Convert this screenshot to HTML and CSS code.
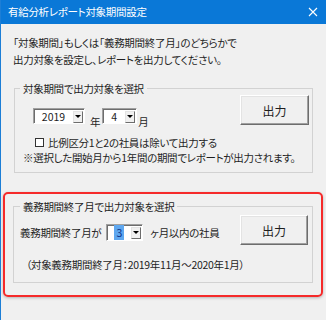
FILE: index.html
```html
<!DOCTYPE html>
<html lang="ja">
<head>
  <meta charset="UTF-8">
  <meta name="viewport" content="width=device-width, initial-scale=1.0">
  <title>有給分析レポート対象期間設定</title>
  <link rel="stylesheet" href="styles.css">
</head>
<body>
  <div class="window">
    <div class="titlebar">
      <span class="title">有給分析レポート対象期間設定</span>
      <svg class="close" width="10" height="10" viewBox="0 0 10 10">
        <path d="M1 1L9 9M9 1L1 9" stroke="#fff" stroke-width="1.1" fill="none"/>
      </svg>
    </div>

    <p class="intro">「対象期間」もしくは「義務期間終了月」のどちらかで<br>出力対象を設定し、レポートを出力してください。</p>

    <fieldset class="group group-period">
      <legend>対象期間で出力対象を選択</legend>
      <div class="group-row">
        <div class="period-select">
          <span class="combo combo-year">
            <span class="combo-value">2019</span>
            <span class="combo-btn"><span class="arrow"></span></span>
          </span>
          <span class="unit unit-year">年</span>
          <span class="combo combo-month">
            <span class="combo-value">4</span>
            <span class="combo-btn"><span class="arrow"></span></span>
          </span>
          <span class="unit unit-month">月</span>
        </div>
        <button class="btn btn-period">出力</button>
      </div>
      <label class="check-row"><span class="checkbox"></span>比例区分1と2の社員は除いて出力する</label>
      <p class="note">※選択した開始月から1年間の期間でレポートが出力されます。</p>
    </fieldset>

    <div class="highlight">
      <fieldset class="group group-duty">
        <legend>義務期間終了月で出力対象を選択</legend>
        <div class="group-row">
          <div class="duty-select">
            <span>義務期間終了月が</span>
            <span class="combo combo-months">
              <span class="combo-value"><span class="selected">3</span></span>
              <span class="combo-btn"><span class="arrow"></span></span>
            </span>
            <span class="duty-suffix">ヶ月以内の社員</span>
          </div>
          <button class="btn btn-duty">出力</button>
        </div>
        <p class="range">（対象義務期間終了月：2019年11月～2020年1月）</p>
      </fieldset>
    </div>
  </div>
</body>
</html>
```

FILE: styles.css
```css
body {
  margin: 0;
  padding: 0;
  font-family: "Noto Sans CJK JP", "Noto Sans", sans-serif;
  font-size: 10.5px;
  letter-spacing: -0.3px;
  font-feature-settings: "palt";
  color: #1e1e1e;
  background-color: #f0f0f0;
}

.window {
  width: 326px;
  height: 320px;
  box-sizing: border-box;
  border-left: 1px solid #1c7ed6;
  background-color: #f0f0f0;
  overflow: hidden;
}

.titlebar {
  height: 24px;
  background-color: #0a78d7;
  color: #fff;
  display: flex;
  align-items: center;
  justify-content: space-between;
  padding: 0 8px 0 7px;
}

.title {
  line-height: 14px;
}

.intro {
  margin: 10px 0 0 12px;
  line-height: 17px;
}

/* group boxes */
.group {
  box-sizing: border-box;
  border: 1px solid #d2d2d2;
  margin: 0;
  min-width: 0;
}

.group legend {
  padding: 0 3px;
  line-height: 13px;
}

.group-period {
  margin: 14px 0 0 13px;
  width: 299px;
  padding: 0 3px 7px 5px;
}

.group-row {
  display: flex;
  justify-content: space-between;
}

.group-period .group-row {
  align-items: flex-end;
  padding-left: 13px;
}

.period-select {
  display: flex;
  align-items: flex-end;
  margin-bottom: 1px;
}

.unit {
  line-height: 13px;
  margin-bottom: -4px;
}

.unit-year {
  margin: 0 2px -4px 5px;
}

.unit-month {
  margin-left: 1px;
}

/* combo boxes */
.combo {
  box-sizing: border-box;
  display: flex;
  align-items: center;
  background-color: #fff;
  border: 1px solid;
  border-color: #a0a0a0 #fff #fff #a0a0a0;
  box-shadow: inset 1px 1px 0 #6d6d6d;
}

.combo-year {
  width: 52px;
  height: 16px;
}

.combo-month {
  width: 35px;
  height: 16px;
}

.combo-months {
  width: 37px;
  height: 17px;
  margin-left: 5px;
}

.combo-value {
  flex: 1;
  text-align: center;
  line-height: 13px;
  padding-top: 1px;
  letter-spacing: 0;
}

.selected {
  background-color: #5ea7ef;
  color: #0c2f86;
  padding: 0 2px;
}

.combo-btn {
  box-sizing: border-box;
  width: 10px;
  height: 12px;
  margin: 1px 1px 0 0;
  background-color: #f0f0f0;
  border: 1px solid;
  border-color: #e3e3e3 #6d6d6d #6d6d6d #e3e3e3;
  display: flex;
  align-items: center;
  justify-content: center;
}

.arrow {
  width: 0;
  height: 0;
  border-left: 3px solid transparent;
  border-right: 3px solid transparent;
  border-top: 3px solid #000;
}

/* buttons */
.btn {
  box-sizing: border-box;
  height: 30px;
  font-family: inherit;
  font-size: 12px;
  letter-spacing: 0;
  font-feature-settings: "palt";
  color: #1e1e1e;
  background-color: #f0f0f0;
  border: 1px solid;
  border-color: #fff #6d6d6d #6d6d6d #fff;
  box-shadow: inset -1px -1px 0 #a0a0a0, inset 1px 1px 0 #e3e3e3;
  padding: 0;
  cursor: pointer;
}

.btn-period {
  width: 69px;
}

.btn-duty {
  width: 68px;
}

/* checkbox and notes */
.check-row {
  display: flex;
  align-items: center;
  margin: 10px 0 0 15px;
  line-height: 15px;
}

.checkbox {
  box-sizing: border-box;
  width: 9px;
  height: 9px;
  border: 1px solid #333;
  background-color: #fff;
  margin-right: 4px;
}

.note {
  margin: 0 0 0 3px;
  line-height: 15px;
  white-space: nowrap;
}

/* red highlighted area */
.highlight {
  box-sizing: border-box;
  margin: 19px 0 0 2px;
  width: 320px;
  height: 105px;
  border: 2px solid #f52a2a;
  border-radius: 5px;
  box-shadow: 0 1px 3px rgba(0, 0, 0, 0.25);
  padding: 0 0 0 8px;
}

.group-duty {
  margin-top: 6px;
  width: 300px;
  padding: 0 4px 10px 6px;
}

.group-duty .group-row {
  align-items: center;
  margin-top: 2px;
}

.duty-select {
  display: flex;
  align-items: center;
  margin-top: 4px;
  line-height: 15px;
}

.duty-suffix {
  margin-left: 7px;
}

.range {
  margin: 12px 0 0 6px;
  line-height: 15px;
}
```
